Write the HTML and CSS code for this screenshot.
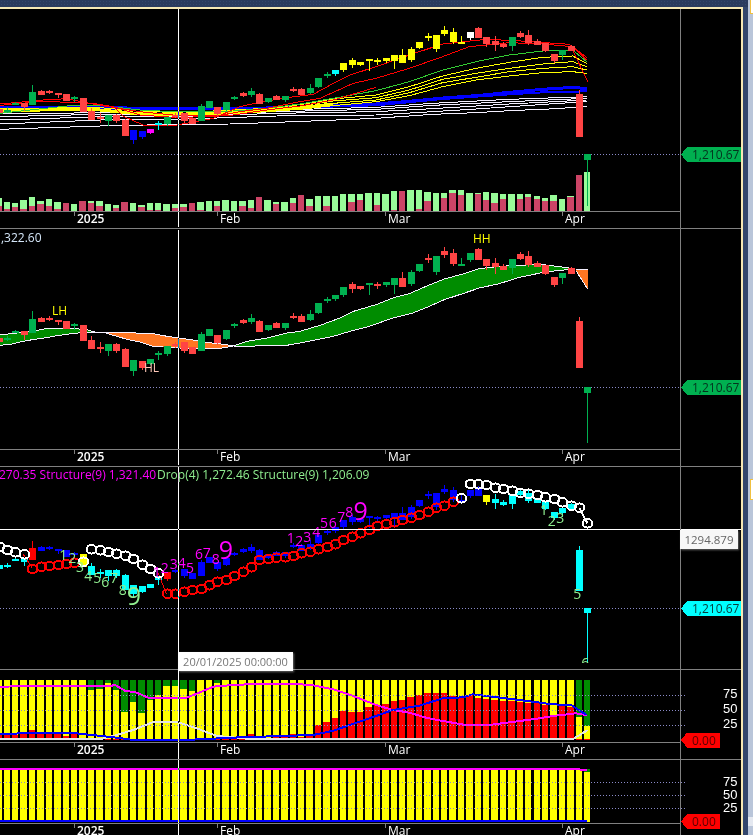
FILE: index.html
```html
<!DOCTYPE html>
<html lang="en">
<head>
  <meta charset="UTF-8">
  <title>Chart</title>
  <link rel="stylesheet" href="styles.css">
</head>
<body>
  <div class="topbar"></div>
  <div class="workspace">
    <!-- Chart panes, filled in by chart.js -->
    <div class="chart">
      <div class="pane pane-price"><svg id="pricePane"></svg></div>
      <div class="pane pane-ribbon"><svg id="ribbonPane"></svg></div>
      <div class="pane pane-count"><svg id="countPane"></svg></div>
      <div class="pane pane-osc"><svg id="oscPane"></svg></div>
      <div class="pane pane-last"><svg id="lastPane"></svg></div>
      <div class="cross-value">1294.879</div>
      <div class="cross-date">20/01/2025 00:00:00</div>
    </div>
    <div class="side">
      <div class="side-dark"></div>
      <div class="side-light">
        <div class="tab tab-top"></div>
        <div class="tab tab-mid"></div>
        <div class="thumb"></div>
      </div>
    </div>
  </div>
  <script src="chart.js"></script>
</body>
</html>
```

FILE: styles.css
```css
/* styles.css */

:root {
  --cream: #f6e7b4;
  --frame: #2b3b5e;
  --grid: #808080;
}

* {
  box-sizing: border-box;
}

html, body {
  margin: 0;
  height: 835px;
  overflow: hidden;
  background-color: var(--frame);
}

.topbar {
  height: 7px;
  background-color: var(--frame);
  background-image: radial-gradient(#34466c 1px, transparent 1px);
  background-size: 3px 3px;
}

.workspace {
  display: flex;
  height: 828px;
}

/* Chart */
.chart {
  position: relative;
  width: 743px;
  border-top: 2px solid var(--cream);
  border-right: 2px solid var(--cream);
  background-color: #000;
}

.pane {
  border-bottom: 1px solid var(--grid);
}

.pane svg {
  display: block;
  width: 741px;
  height: 100%;
  shape-rendering: crispEdges;
  font-family: "Open Sans", "Noto Sans", sans-serif;
}

.pane-price { height: 220px; }
.pane-ribbon { height: 238px; }
.pane-count { height: 203px; }
.pane-osc { height: 90px; }
.pane-last { height: 75px; border-bottom: none; }

.cross-value {
  position: absolute;
  left: 680px;
  top: 521px;
  width: 58px;
  height: 19px;
  background-color: #f7f7f7;
  color: #666;
  font: 11.5px/20px "Open Sans", sans-serif;
  text-align: center;
  box-shadow: 1px 1px 2px rgba(255, 255, 255, 0.4);
}

.cross-date {
  position: absolute;
  left: 178px;
  top: 643px;
  width: 115px;
  height: 19px;
  background-color: #fff;
  color: #777;
  font: 11px/20px "Open Sans", sans-serif;
  text-align: center;
  white-space: nowrap;
  box-shadow: 1px 1px 2px rgba(255, 255, 255, 0.4);
}

/* Right hand strip */
.side {
  display: flex;
  flex: 1;
}

.side-dark {
  width: 5px;
  background-color: #33466c;
}

.side-light {
  position: relative;
  flex: 1;
  margin-top: -7px;
  background-color: #b9c5d9;
}

.tab {
  position: absolute;
  left: 2px;
  right: 0;
  border: 1px solid #f0c040;
  border-right: none;
  background-color: #fff;
}

.tab-top { top: -2px; height: 16px; }
.tab-mid { top: 479px; height: 21px; }

.thumb {
  position: absolute;
  left: 0;
  right: 0;
  top: 817px;
  height: 9px;
  background-color: #e4e8f0;
}

/* Candles: fill is for the body, stroke for the wick */
.c-g { fill: #00b050; stroke: #00b050; }
.c-r { fill: #ff4444; stroke: #ff4444; }
.c-y { fill: #ffff00; stroke: #ffff00; }
.c-c { fill: #00ffff; stroke: #00ffff; }
.c-b { fill: #0000ff; stroke: #0000ff; }
.c-m { fill: #ff00ff; stroke: #ff00ff; }
.c-w { fill: #ffffff; stroke: #ffffff; }
.c-R { fill: #ff0000; stroke: #ff0000; }

.pane rect, .pane polygon {
  stroke: none;
}

.vol-up { fill: #98fb98; }
.vol-down { fill: #cc4466; }
.bar-yellow { fill: #ffff00; }
.bar-green { fill: #008c00; }
.bar-red { fill: #ff0000; }
.cloud-up { fill: #008c00; }
.cloud-down { fill: #ff7722; }
.mask { fill: #000; }

/* Lines */
.line {
  fill: none;
  stroke-width: 1;
}

.l-red { stroke: #ff0000; }
.l-green { stroke: #33cc33; }
.l-yellow { stroke: #ffff00; }
.l-yellow-wide { stroke: #ffff00; stroke-width: 3; }
.l-blue { stroke: #0000ff; stroke-width: 2; }
.l-blue-wide { stroke: #0000ff; stroke-width: 3; }
.l-white { stroke: #f4f0ff; }
.l-white-wide { stroke: #ffffff; stroke-width: 2; }
.l-magenta { stroke: #ff00ff; stroke-width: 2; }
.l-grey-wide { stroke: #e4e4e4; stroke-width: 2; }

.grid { stroke: var(--grid); }
.dots { stroke: #8a8ac8; stroke-dasharray: 1 2; }

.cross {
  stroke: #fff;
  mix-blend-mode: difference;
}

.cross-flat { stroke: #fff; }

.ring {
  fill: none;
  stroke-width: 2;
}

.ring-white { stroke: #fff; }
.ring-red { stroke: #ff0000; }

/* Text */
.pane text {
  stroke: none;
  shape-rendering: auto;
  font-size: 12px;
}

.axis-text { fill: #fff; }
.axis-bold { fill: #fff; font-weight: 600; }
.legend-white { fill: #d4e6f8; }
.legend-magenta { fill: #ff00ff; }
.legend-green { fill: #90ee90; }
.tag-dark { fill: #04331e; }
.tag-cyan { fill: #063a3a; }
.tag-red { fill: #5a0000; }
.tag-g { fill: #00b050; }
.tag-c { fill: #00ffff; }
.tag-rd { fill: #ff0000; }
.label-yellow { fill: #ffff00; }
.label-pink { fill: #ffc8b8; }
.scale-text { fill: #fff; }
.pane .scale-text { font-family: "Liberation Sans", sans-serif; font-size: 13px; }
.pane .num { font-size: 14px; text-anchor: middle; dominant-baseline: central; }
.pane .num-big { font-size: 25px; text-anchor: middle; dominant-baseline: central; }
.num-magenta { fill: #ff00ff; }
.num-green { fill: #90ee90; }
```

FILE: chart.js
```js
document.addEventListener('DOMContentLoaded', function () {
  const SVG_NS = 'http://www.w3.org/2000/svg';
  const FIRST_BAR = -4;
  const LAST_BAR = 66;

  // Every y (and x) in the tables below is in thirds of a pixel
  const candles = [
    [328, 340, 328, 340], [329, 332, 322, 338], [310, 314, 307, 314], [310, 321, 310, 333],
    [276, 314, 255, 314], [273, 285, 270, 285], [273, 276, 269, 281], [279, 285, 279, 294],
    [282, 303, 282, 303], [291, 294, 287, 307], [294, 336, 294, 336], [333, 360, 324, 360],
    [352, 358, 340, 369], [345, 363, 345, 378], [345, 363, 341, 369], [360, 408, 357, 408],
    [390, 420, 390, 432], [393, 412, 393, 417], [387, 400, 387, 402], [369, 375, 363, 390],
    [351, 372, 351, 378], [346, 349, 340, 355], [340, 363, 340, 369], [354, 372, 354, 372],
    [318, 363, 312, 363], [303, 324, 303, 324], [321, 342, 321, 348], [306, 330, 306, 333],
    [291, 295, 287, 300], [279, 288, 276, 291], [273, 285, 264, 291], [282, 312, 279, 312],
    [294, 306, 294, 309], [288, 300, 285, 300], [288, 300, 288, 306], [267, 273, 261, 276],
    [267, 285, 264, 285], [264, 279, 252, 282], [234, 261, 234, 264], [222, 225, 216, 234],
    [210, 222, 210, 228], [189, 210, 189, 216], [180, 195, 174, 204], [186, 195, 186, 198],
    [177, 183, 177, 212], [180, 186, 175, 195], [174, 183, 174, 188], [165, 183, 165, 207],
    [165, 189, 147, 189], [147, 180, 141, 186], [126, 144, 126, 147], [108, 114, 99, 123],
    [105, 147, 105, 156], [90, 102, 78, 108], [96, 126, 84, 132], [126, 129, 108, 129],
    [96, 114, 96, 120], [84, 114, 81, 114], [111, 132, 111, 141], [123, 135, 108, 153],
    [132, 141, 127, 143], [111, 138, 111, 153], [99, 111, 93, 114], [105, 129, 90, 135],
    [123, 135, 118, 135], [129, 153, 129, 156], [162, 183, 162, 189], [150, 165, 150, 180],
    [138, 153, 135, 153], [282, 411, 270, 411], [463, 479, 463, 617]
  ];

  // One letter per bar, in tens after the first four bars
  const priceColors = ['rggr', 'grrrrgrrrg', 'rrbbmcgrrr', 'ggrggrgrgr', 'grrgggcyyy', 'yyyyyyyyyy', 'yywrrrrgrr', 'rrrgrrg'].join('');
  const ribbonColors = ['rggr', 'grrrrgrrrg', 'rrgrgggrrr', 'ggrggrgrgr', 'grrgggggrr', 'grggrggrgr', 'rggrrrrgrr', 'rrrgrrg'].join('');
  const countColors = ['cccc', 'Rbbbbbyccc', 'ccccccRbbb', 'bbbbbbbbbb', 'bbbbbbbbbb', 'bbbbbbbbbb', 'bbbbyccccc', 'ccccccc'].join('');

  // [light top, red top] for each volume bar, 633 is the axis
  const volumes = [
    [594, 617], [606, 627], [609, 621], [600, 627], [591, 618], [603, 612], [597, 618], [606, 627],
    [633, 609], [612, 633], [633, 603], [603, 609], [603, 618], [612, 633], [615, 624], [633, 606],
    [609, 633], [615, 621], [609, 630], [609, 630], [612, 633], [612, 624], [612, 621], [633, 609],
    [606, 630], [603, 633], [603, 618], [600, 633], [603, 633], [603, 618], [600, 624], [633, 591],
    [600, 633], [606, 612], [606, 633], [594, 609], [633, 585], [597, 618], [588, 633], [588, 618],
    [588, 633], [582, 633], [582, 606], [582, 600], [579, 633], [579, 615], [582, 633], [573, 630],
    [633, 573], [570, 633], [570, 627], [576, 603], [579, 633], [579, 594], [570, 579], [570, 585],
    [579, 633], [579, 582], [576, 600], [579, 609], [582, 597], [582, 633], [582, 597], [582, 591],
    [588, 597], [594, 603], [585, 603], [597, 633], [588, 591], [524, 526], [516, 633]
  ];

  // Oscillator pane: where the red part starts, and where the green part ends
  const oscRed = [
    255, 255, 255, 252, 240, 246, 246, 250, 258, 252, 268, 268, 268, 268, 267, 265,
    268, 268, 268, 268, 268, 268, 268, 268, 264, 265, 265, 265, 262, 258, 252, 262,
    265, 262, 262, 252, 262, 255, 225, 216, 204, 183, 186, 186, 171, 165, 162, 153,
    150, 141, 135, 129, 129, 129, 138, 141, 135, 143, 147, 150, 153, 153, 155, 158,
    160, 165, 195, 168, 170, 268, 268
  ];
  const oscGreen = { 7: 120, 8: 117, 9: 100, 10: 120, 11: 185, 12: 155, 13: 188, 14: 150, 15: 135, 16: 107, 17: 107, 18: 117, 19: 123, 22: 98, 65: 200, 66: 228 };

  // Rings of the count pane as [bar, y]
  const whiteRings = [
    [[-4, 245], [-3, 255], [-2, 262], [-1, 268]],
    [[6, 290]],
    [[7, 253], [8, 256], [9, 261], [10, 266], [11, 272], [12, 282], [13, 299], [14, 312], [15, 325]],
    [[51, 100]],
    [[52, 57], [53, 58], [54, 60], [55, 68], [56, 72], [57, 77], [58, 84], [59, 86], [60, 90], [61, 97], [62, 102], [63, 112], [64, 122], [65, 128]],
    [[66, 175]]
  ];
  const redRings = [
    [[0, 312], [1, 305], [2, 303], [3, 300], [4, 297], [5, 293]],
    [[16, 386], [17, 386], [18, 380], [19, 375], [20, 372], [21, 361], [22, 350], [23, 345], [24, 333], [25, 320], [26, 307],
      [27, 285], [28, 282], [29, 278], [30, 277], [31, 273], [32, 265], [33, 260], [34, 253], [35, 246], [36, 238], [37, 225],
      [38, 215], [39, 205], [40, 195], [41, 183], [42, 177], [43, 172], [44, 165], [45, 158], [46, 150], [47, 140], [48, 128],
      [49, 122], [50, 110]]
  ];

  // Count labels as [text, x, y, big]
  const greenNums = [
    ['1', 190, 268], ['2', 217, 278], ['3', 240, 305], ['4', 265, 331], ['5', 292, 338], ['6', 316, 348], ['7', 342, 338],
    ['8', 368, 373], ['9', 402, 390, true], ['1', 1631, 133], ['2', 1655, 166], ['3', 1681, 158], ['5', 1732, 386], ['6', 1756, 593]
  ];
  const magentaNums = [
    ['1', 470, 320], ['2', 494, 307], ['3', 521, 296], ['4', 545, 293], ['5', 570, 308], ['6', 597, 266], ['7', 620, 263],
    ['8', 647, 280], ['9', 678, 253, true], ['1', 872, 218], ['2', 898, 225], ['3', 922, 213], ['4', 949, 198], ['5', 972, 173],
    ['6', 998, 173], ['7', 1024, 153], ['8', 1048, 138], ['9', 1082, 135, true]
  ];

  function barCenter(i) {
    return 32.3 + i * 8.41;
  }

  function barX(i) {
    return Math.round(barCenter(i));
  }

  // Histogram bars come out 6 or 7px wide depending on rounding
  function barSpan(i) {
    const left = Math.round(barCenter(i) - 3.4);
    return { x: left, width: Math.round(barCenter(i) + 3) - left };
  }

  function add(svg, tag, attrs, text) {
    const el = document.createElementNS(SVG_NS, tag);
    for (const key in attrs) {
      el.setAttribute(key, attrs[key]);
    }
    if (text !== undefined) {
      el.textContent = text;
    }
    svg.appendChild(el);
    return el;
  }

  function setupPane(id, top, height) {
    const svg = document.getElementById(id);
    svg.setAttribute('viewBox', `0 ${top} 741 ${height}`);
    return svg;
  }

  function hLine(svg, cls, y, x1, x2) {
    add(svg, 'line', { class: cls, x1: x1, x2: x2, y1: y + 0.5, y2: y + 0.5 });
  }

  function vLine(svg, cls, x, y1, y2) {
    add(svg, 'line', { class: cls, x1: x + 0.5, x2: x + 0.5, y1: y1, y2: y2 });
  }

  // Left points are in the left half of the picture, right points get 376px added
  function trace(left, right, yOff) {
    const shifted = (right || []).map(p => [p[0] + 1128, p[1]]);
    return left.concat(shifted).map(p => [p[0] / 3, p[1] / 3 + (yOff || 0)]);
  }

  function polyline(svg, cls, pts) {
    add(svg, 'polyline', { class: 'line ' + cls, points: pts.map(p => p.join(',')).join(' ') });
  }

  function drawCandles(svg, colors, mapY) {
    candles.forEach(function (c, n) {
      const x = barX(n + FIRST_BAR);
      const cls = 'c-' + colors[n];
      const top = Math.round(mapY(c[0] / 3));
      const bottom = Math.round(mapY(c[1] / 3));
      add(svg, 'line', { class: cls, x1: x + 0.5, x2: x + 0.5, y1: Math.round(mapY(c[2] / 3)), y2: Math.round(mapY(c[3] / 3)) });
      add(svg, 'rect', { class: cls, x: x - 3, y: top, width: 7, height: Math.max(bottom - top, 2) });
    });
  }

  function drawAxis(svg, y) {
    hLine(svg, 'grid', y, 0, 680);
    [[74, '2025', 'axis-bold'], [217, 'Feb', 'axis-text'], [385, 'Mar', 'axis-text'], [562, 'Apr', 'axis-text']].forEach(function (t) {
      vLine(svg, 'grid', t[0], y, y + 5);
      add(svg, 'text', { class: t[2], x: t[0] + 3, y: y + 12 }, t[1]);
    });
  }

  function drawTag(svg, y, width, bodyCls, textCls, label) {
    const right = 681 + width;
    add(svg, 'polygon', { class: bodyCls, points: `681,${y} 687,${y - 7.5} ${right},${y - 7.5} ${right},${y + 7.5} 687,${y + 7.5}` });
    add(svg, 'text', { class: textCls, x: 692, y: y + 4.5 }, label);
  }

  function drawScale(svg, rows) {
    rows.forEach(function (r) {
      hLine(svg, 'dots', r[1], 0, 685);
      add(svg, 'text', { class: 'scale-text', x: 723, y: r[2] }, r[0]);
    });
  }

  function drawRing(svg, cls, ring, off) {
    add(svg, 'ellipse', { class: 'ring ' + cls, cx: barX(ring[0]) + 0.5, cy: ring[1] / 3 + off, rx: 5, ry: 4.2 });
  }

  // Top pane: candles over moving averages and volume
  function drawPricePane() {
    const svg = setupPane('pricePane', 9, 219);

    volumes.forEach(function (v, n) {
      const span = barSpan(n + FIRST_BAR);
      if (v[0] < 633) {
        add(svg, 'rect', { class: 'vol-up', x: span.x, y: Math.round(v[0] / 3), width: span.width, height: 211 - Math.round(v[0] / 3) });
      }
      if (v[1] < 633) {
        add(svg, 'rect', { class: 'vol-down', x: span.x, y: Math.round(v[1] / 3), width: span.width, height: 211 - Math.round(v[1] / 3) });
      }
    });

    const whites = [
      [[[0, 388], [80, 385], [180, 382], [300, 378], [535, 373], [690, 372], [830, 367], [960, 362], [1128, 355]], [[70, 350], [170, 343], [300, 338], [400, 332], [520, 327], [632, 320]]],
      [[[0, 372], [100, 368], [300, 360], [535, 358], [830, 348], [1128, 345]], [[170, 335], [300, 327], [520, 312], [632, 305]]],
      [[[0, 360], [300, 350], [535, 350], [830, 340], [1128, 335]], [[170, 326], [400, 312], [632, 300]]],
      [[[0, 350], [300, 343], [535, 345], [830, 335], [1128, 328]], [[170, 316], [400, 305], [632, 295]]],
      [[[0, 342], [300, 338], [535, 340], [830, 330], [1128, 322]], [[170, 310], [400, 298], [632, 290]]]
    ];
    whites.forEach(w => polyline(svg, 'l-white', trace(w[0], w[1])));

    polyline(svg, 'l-blue', trace([[0, 325], [300, 326], [535, 328], [1128, 316]], [[200, 297], [300, 290], [400, 283], [500, 277], [632, 274]]));
    polyline(svg, 'l-blue-wide', trace([[0, 322], [380, 324], [530, 326], [700, 326], [850, 323], [1000, 318], [1128, 312]], [[100, 304], [200, 294], [300, 287], [400, 277], [500, 268], [590, 262], [632, 266]]));

    polyline(svg, 'l-yellow-wide', trace([[0, 333], [200, 328], [300, 330], [420, 342], [520, 343], [640, 341], [800, 331], [900, 323], [1000, 312]]));
    polyline(svg, 'l-yellow', trace([[0, 337], [200, 330], [300, 332], [420, 345], [520, 347], [640, 345], [800, 335], [900, 328], [1000, 317], [1128, 305]], [[100, 287], [200, 260], [300, 240], [400, 228], [500, 218], [590, 215], [632, 220]]));
    polyline(svg, 'l-yellow', trace([[0, 333], [200, 328], [300, 330], [420, 342], [520, 343], [640, 341], [800, 331], [900, 323], [1000, 310], [1128, 300]], [[100, 278], [200, 248], [300, 232], [400, 215], [500, 205], [590, 200], [632, 210]]));
    polyline(svg, 'l-yellow', trace([[0, 330], [200, 326], [300, 327], [420, 338], [520, 340], [640, 337], [800, 327], [900, 318], [1000, 303], [1128, 293]], [[100, 270], [200, 238], [300, 220], [400, 205], [500, 192], [590, 185], [632, 200]]));
    polyline(svg, 'l-yellow', trace([[0, 327], [200, 323], [300, 323], [420, 334], [520, 337], [640, 333], [800, 325], [900, 314], [1000, 297], [1128, 285]], [[100, 260], [200, 228], [300, 205], [400, 187], [500, 172], [590, 168], [632, 190]]));
    polyline(svg, 'l-green', trace([[0, 340], [200, 318], [300, 316], [420, 330], [520, 335], [700, 333], [800, 325], [900, 312], [1000, 295], [1128, 272]], [[100, 245], [200, 210], [300, 185], [400, 165], [500, 153], [590, 150], [632, 185]]));

    polyline(svg, 'l-red', trace([[300, 316], [420, 335], [520, 345], [700, 345], [800, 330], [900, 318], [1000, 300], [1128, 262]]));
    polyline(svg, 'l-red', trace([[0, 316], [130, 304], [280, 310], [340, 320], [420, 345], [520, 352], [640, 350], [720, 335], [800, 325], [900, 305], [960, 295], [1060, 250], [1128, 235]], [[100, 205], [200, 170], [280, 140], [400, 128], [500, 132], [590, 140], [632, 180]]));
    polyline(svg, 'l-red', trace([[0, 312], [130, 300], [200, 296], [280, 312], [340, 320], [372, 350], [430, 375], [530, 375], [640, 355], [720, 320], [778, 307], [860, 293], [940, 283], [1000, 250], [1050, 225], [1128, 200]], [[100, 165], [200, 132], [330, 118], [420, 122], [580, 133], [632, 172]]));
    polyline(svg, 'l-red', trace([], [[590, 150], [635, 245]]));

    hLine(svg, 'dots', 154, 0, 680);
    drawCandles(svg, priceColors, y => y);
    drawAxis(svg, 211);
    vLine(svg, 'grid', 680, 9, 228);
    vLine(svg, 'cross', 178, 9, 227);
    drawTag(svg, 154.5, 60, 'tag-g', 'tag-dark', '1,210.67');
  }

  // Second pane: two averages with the cloud between them
  function drawRibbonPane() {
    const svg = setupPane('ribbonPane', 229, 237);
    const off = 228;

    function cloud(cls, top, bottom) {
      const pts = top.concat(bottom.slice().reverse());
      add(svg, 'polygon', { class: cls, points: pts.map(p => p.join(',')).join(' ') });
    }

    const upper1 = trace([[0, 320], [35, 317], [70, 313], [97, 310], [133, 303], [172, 302], [223, 302], [260, 305], [285, 312]], null, off);
    const lower1 = trace([[0, 352], [35, 348], [70, 340], [97, 335], [133, 330], [172, 323], [223, 316], [260, 313], [285, 312]], null, off);
    const upper2 = trace([[285, 312], [385, 312], [415, 316], [460, 317], [490, 323], [535, 330], [575, 335], [610, 342], [680, 350], [700, 354]], null, off);
    const lower2 = trace([[285, 312], [310, 313], [350, 325], [385, 335], [420, 342], [460, 355], [535, 360], [660, 361], [680, 358], [700, 354]], null, off);
    const upper3 = trace([[700, 354], [740, 340], [800, 330], [860, 315], [900, 310], [960, 292], [1020, 270], [1060, 250], [1128, 230]], [[50, 210], [100, 197], [150, 175], [205, 153], [260, 138], [310, 122], [370, 115], [430, 112], [490, 109], [520, 112], [580, 120], [595, 123]], off);
    const lower3 = trace([[700, 354], [720, 355], [860, 352], [900, 345], [950, 335], [1000, 325], [1050, 310], [1100, 297], [1128, 288]], [[50, 270], [110, 255], [160, 235], [205, 215], [260, 197], [310, 180], [370, 167], [430, 148], [470, 140], [500, 133], [550, 127], [595, 124]], off);
    const upper4 = trace([], [[600, 123], [635, 123]], off);
    const lower4 = trace([], [[600, 128], [635, 183]], off);

    cloud('cloud-up', upper1, lower1);
    cloud('cloud-down', upper2, lower2);
    cloud('cloud-up', upper3, lower3);
    cloud('cloud-down', upper4, lower4);
    [upper1, lower1, upper2, lower2, upper3, lower3, upper4, lower4].forEach(pts => polyline(svg, 'l-white', pts));

    hLine(svg, 'dots', 387, 0, 680);
    drawCandles(svg, ribbonColors, y => 321 + (y - 94) * 1.094);
    drawAxis(svg, 449);
    vLine(svg, 'grid', 680, 229, 466);
    vLine(svg, 'cross', 178, 230, 465);

    add(svg, 'text', { class: 'legend-white', x: 1, y: 242 }, ',322.60');
    add(svg, 'text', { class: 'label-yellow', x: 52, y: 315 }, 'LH');
    add(svg, 'text', { class: 'label-pink', x: 144, y: 372 }, 'HL');
    add(svg, 'text', { class: 'label-yellow', x: 473, y: 243 }, 'HH');
    drawTag(svg, 387.5, 60, 'tag-g', 'tag-dark', '1,210.67');
  }

  // Third pane: same candles with the ring chains and the counts
  function drawCountPane() {
    const svg = setupPane('countPane', 467, 202);
    const off = 465;

    hLine(svg, 'dots', 608, 0, 680);
    drawCandles(svg, countColors, y => 550 + (y - 94) * 0.96);
    vLine(svg, 'c-c', barX(66), 610, 663);

    polyline(svg, 'l-red', trace([[70, 268], [97, 310]], null, off));
    polyline(svg, 'l-red', trace([[475, 325], [499, 386]], null, off));
    polyline(svg, 'l-white-wide', trace([], [[610, 128], [634, 175]], off));

    redRings.forEach(chain => chain.forEach(r => drawRing(svg, 'ring-red', r, off)));
    whiteRings.forEach(chain => chain.forEach(r => drawRing(svg, 'ring-white', r, off)));

    function nums(list, color) {
      list.forEach(function (n) {
        add(svg, 'text', { class: (n[3] ? 'num-big ' : 'num ') + color, x: n[1] / 3, y: n[2] / 3 + off }, n[0]);
      });
    }
    nums(greenNums, 'num-green');
    nums(magentaNums, 'num-magenta');

    // The last count is cut off just under the top half
    add(svg, 'rect', { class: 'mask', x: 578, y: 663, width: 18, height: 6 });

    add(svg, 'text', { class: 'legend-magenta', x: -1, y: 479 }, '270.35 Structure(9) 1,321.40');
    add(svg, 'text', { class: 'legend-green', x: 157, y: 479 }, 'Drop(4) 1,272.46 Structure(9) 1,206.09');

    hLine(svg, 'cross-flat', 529, 0, 741);
    vLine(svg, 'grid', 680, 467, 669);
    vLine(svg, 'cross', 178, 467, 669);
    drawTag(svg, 608.5, 60, 'tag-c', 'tag-cyan', '1,210.67');
  }

  // Fourth pane: oscillator stacked bars
  function drawOscPane() {
    const svg = setupPane('oscPane', 670, 89);

    for (let i = FIRST_BAR; i <= LAST_BAR; i++) {
      const span = barSpan(i);
      const red = Math.round(oscRed[i - FIRST_BAR] / 3) + 650;
      add(svg, 'rect', { class: 'bar-yellow', x: span.x, y: 680, width: span.width, height: 60 });
      if (oscGreen[i]) {
        add(svg, 'rect', { class: 'bar-green', x: span.x, y: 680, width: span.width, height: Math.round(oscGreen[i] / 3) + 650 - 680 });
      }
      if (red < 740) {
        add(svg, 'rect', { class: 'bar-red', x: span.x, y: red, width: span.width, height: 740 - red });
      }
    }

    polyline(svg, 'l-grey-wide', trace([[0, 268], [300, 268], [350, 255], [400, 240], [460, 216], [530, 215], [590, 235], [650, 258], [720, 264], [760, 268], [1128, 268]], [[590, 268], [635, 240]], 650));
    polyline(svg, 'l-magenta', trace([[0, 110], [120, 108], [330, 108], [345, 105], [375, 122], [410, 128], [445, 143], [535, 145], [560, 143], [600, 127], [640, 110], [700, 105], [790, 101], [930, 104], [1000, 118], [1060, 138], [1128, 165]], [[50, 180], [100, 188], [150, 203], [200, 213], [270, 225], [340, 225], [400, 217], [470, 208], [530, 198], [600, 190], [632, 195]], 650));
    polyline(svg, 'l-blue', trace([[0, 251], [220, 249], [350, 263], [400, 270], [535, 271], [720, 262], [940, 255], [1000, 242], [1128, 198]], [[50, 180], [130, 167], [200, 145], [260, 142], [290, 133], [350, 140], [430, 150], [530, 163], [585, 165], [632, 195]], 650));

    drawScale(svg, [['75', 695, 698], ['50', 710, 713], ['25', 725, 728]]);
    drawAxis(svg, 742);
    vLine(svg, 'grid', 680, 670, 759);
    vLine(svg, 'cross', 178, 670, 759);
    drawTag(svg, 740, 39, 'tag-rd', 'tag-red', '0.00');
  }

  // Bottom pane, cut off by the window
  function drawLastPane() {
    const svg = setupPane('lastPane', 760, 75);

    for (let i = FIRST_BAR; i <= LAST_BAR; i++) {
      const span = barSpan(i);
      add(svg, 'rect', { class: 'bar-yellow', x: span.x, y: i === LAST_BAR ? 772 : 770, width: span.width, height: i === LAST_BAR ? 50 : 52 });
    }
    const lastSpan = barSpan(LAST_BAR);
    add(svg, 'rect', { class: 'bar-green', x: lastSpan.x, y: 769, width: lastSpan.width, height: 3 });
    polyline(svg, 'l-magenta', trace([[0, 357], [1128, 357]], [[605, 357], [620, 360], [634, 361]], 650));
    polyline(svg, 'l-blue', trace([[0, 512], [1128, 512]], [[634, 512]], 650));

    drawScale(svg, [['75', 782, 786], ['50', 795, 799], ['25', 808, 812]]);
    drawAxis(svg, 823);
    vLine(svg, 'grid', 680, 760, 835);
    vLine(svg, 'cross', 178, 760, 835);
    drawTag(svg, 821.5, 39, 'tag-rd', 'tag-red', '0.00');
  }

  drawPricePane();
  drawRibbonPane();
  drawCountPane();
  drawOscPane();
  drawLastPane();
});
```
